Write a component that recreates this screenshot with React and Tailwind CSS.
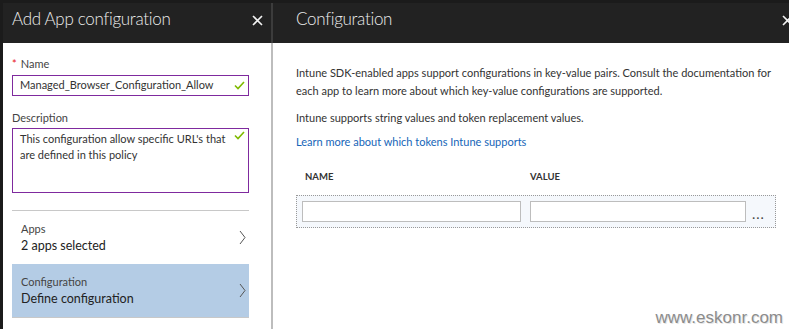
import React from 'react';

const Check = () => (
  <svg width="11" height="9" viewBox="0 0 11 9" className="shrink-0">
    <path d="M1 4.5 L4 7.5 L10 1" fill="none" stroke="#7fba00" strokeWidth="1.6" />
  </svg>
);

const Close = ({ className }) => (
  <svg width="11" height="11" viewBox="0 0 11 11" className={className}>
    <path d="M1 1 L10 10 M10 1 L1 10" stroke="#f2f2f2" strokeWidth="1.6" />
  </svg>
);

const Chevron = () => (
  <svg width="7" height="15" viewBox="0 0 7 15" className="shrink-0">
    <path d="M1 1 L6 7.5 L1 14" fill="none" stroke="#555" strokeWidth="1" />
  </svg>
);

const App = () => {
  return (
    <div
      className="w-[789px] h-[329px] flex bg-[#1b1b1b] pt-[3px] pl-[3px] overflow-hidden text-[#333]"
      style={{ fontFamily: 'Lato, "Open Sans", sans-serif' }}
    >
      {/* Left blade */}
      <div className="w-[270px] flex flex-col shrink-0">
        <div className="h-[40px] bg-[#222] flex items-start justify-between pl-[9px] pr-[8px] pt-[4px] border-r-2 border-[#3c3c3c]">
          <span className="text-[17px] font-light text-[#ececec] leading-[24px] tracking-[-0.3px]">Add App configuration</span>
          <Close className="mt-[8px]" />
        </div>
        <div className="flex-1 bg-white border-r-2 border-[#bdbdbd] pl-[9px] pr-[22px] pt-[14px]">
          <div className="text-[11px] leading-[14px] text-[#444]">
            <span className="text-[#e81123] mr-[4px]">*</span>Name
          </div>
          <div className="mt-[4px] h-[21px] border border-[#7f2a9e] flex items-center justify-between pl-[7px] pr-[3px]">
            <span className="text-[11px] text-[#333]">Managed_Browser_Configuration_Allow</span>
            <Check />
          </div>
          <div className="mt-[15px] text-[11px] leading-[14px] text-[#444]">Description</div>
          <div className="mt-[3px] h-[65px] border border-[#7f2a9e] flex items-start justify-between pl-[7px] pr-[3px] pt-[2px]">
            <span className="text-[11px] leading-[16px] text-[#333] w-[210px]">
              This configuration allow specific URL's that are defined in this policy
            </span>
            <Check />
          </div>
          <div className="mt-[17px] border-t border-[#c8c8c8]">
            <div className="h-[53px] flex items-center justify-between pl-[9px] pr-[3px]">
              <div className="flex flex-col">
                <span className="text-[11px] leading-[16px] text-[#444]">Apps</span>
                <span className="text-[12.5px] leading-[18px] text-[#222]">2 apps selected</span>
              </div>
              <Chevron />
            </div>
            <div className="h-[54px] bg-[#b4cce5] border-b border-[#c8c8c8] flex items-center justify-between pl-[9px] pr-[3px]">
              <div className="flex flex-col">
                <span className="text-[11px] leading-[16px] text-[#444]">Configuration</span>
                <span className="text-[12.5px] leading-[18px] text-[#222]">Define configuration</span>
              </div>
              <Chevron />
            </div>
          </div>
        </div>
      </div>

      {/* Right blade */}
      <div className="flex-1 flex flex-col">
        <div className="h-[40px] bg-[#222] flex items-start justify-between pl-[23px] pt-[4px]">
          <span className="text-[17px] font-light text-[#ececec] leading-[24px] tracking-[-0.3px]">Configuration</span>
          <Close className="mt-[8px] -mr-[3px]" />
        </div>
        <div className="flex-1 bg-white pl-[23px] pr-[14px] pt-[21px] relative">
          <p className="text-[11px] leading-[17.5px] text-[#333]">
            Intune SDK-enabled apps support configurations in key-value pairs. Consult the documentation for each app to learn more about which key-value configurations are supported.
          </p>
          <p className="mt-[10px] text-[11px] leading-[17px] text-[#333]">
            Intune supports string values and token replacement values.
          </p>
          <p className="mt-[7px] text-[11px] leading-[17px] text-[#1565b8]">
            Learn more about which tokens Intune supports
          </p>
          <div className="mt-[20px] flex text-[9.5px] font-bold text-[#333] leading-[14px]">
            <span className="w-[234px] pl-[9px]">NAME</span>
            <span>VALUE</span>
          </div>
          <div className="mt-[11px] w-[480px] h-[33px] border border-dotted border-[#999] bg-[#f5f8fc] flex items-center pl-[5px]">
            <div className="w-[219px] h-[21px] bg-white border border-[#bdbdbd]"></div>
            <div className="ml-[9px] w-[216px] h-[21px] bg-white border border-[#bdbdbd]"></div>
            <span className="ml-[6px] mt-[4px] text-[14px] leading-[10px] text-[#444] tracking-[1px]">...</span>
          </div>
          <div className="absolute right-[7px] bottom-[0px] text-[17px] text-[#8c8c8c] leading-[22px]" style={{ fontFamily: '"Liberation Sans", Arial, sans-serif', textShadow: '1px 1px 0 #e6e6e6' }}>
            www.eskonr.com
          </div>
        </div>
      </div>
    </div>
  );
};

export default App;
